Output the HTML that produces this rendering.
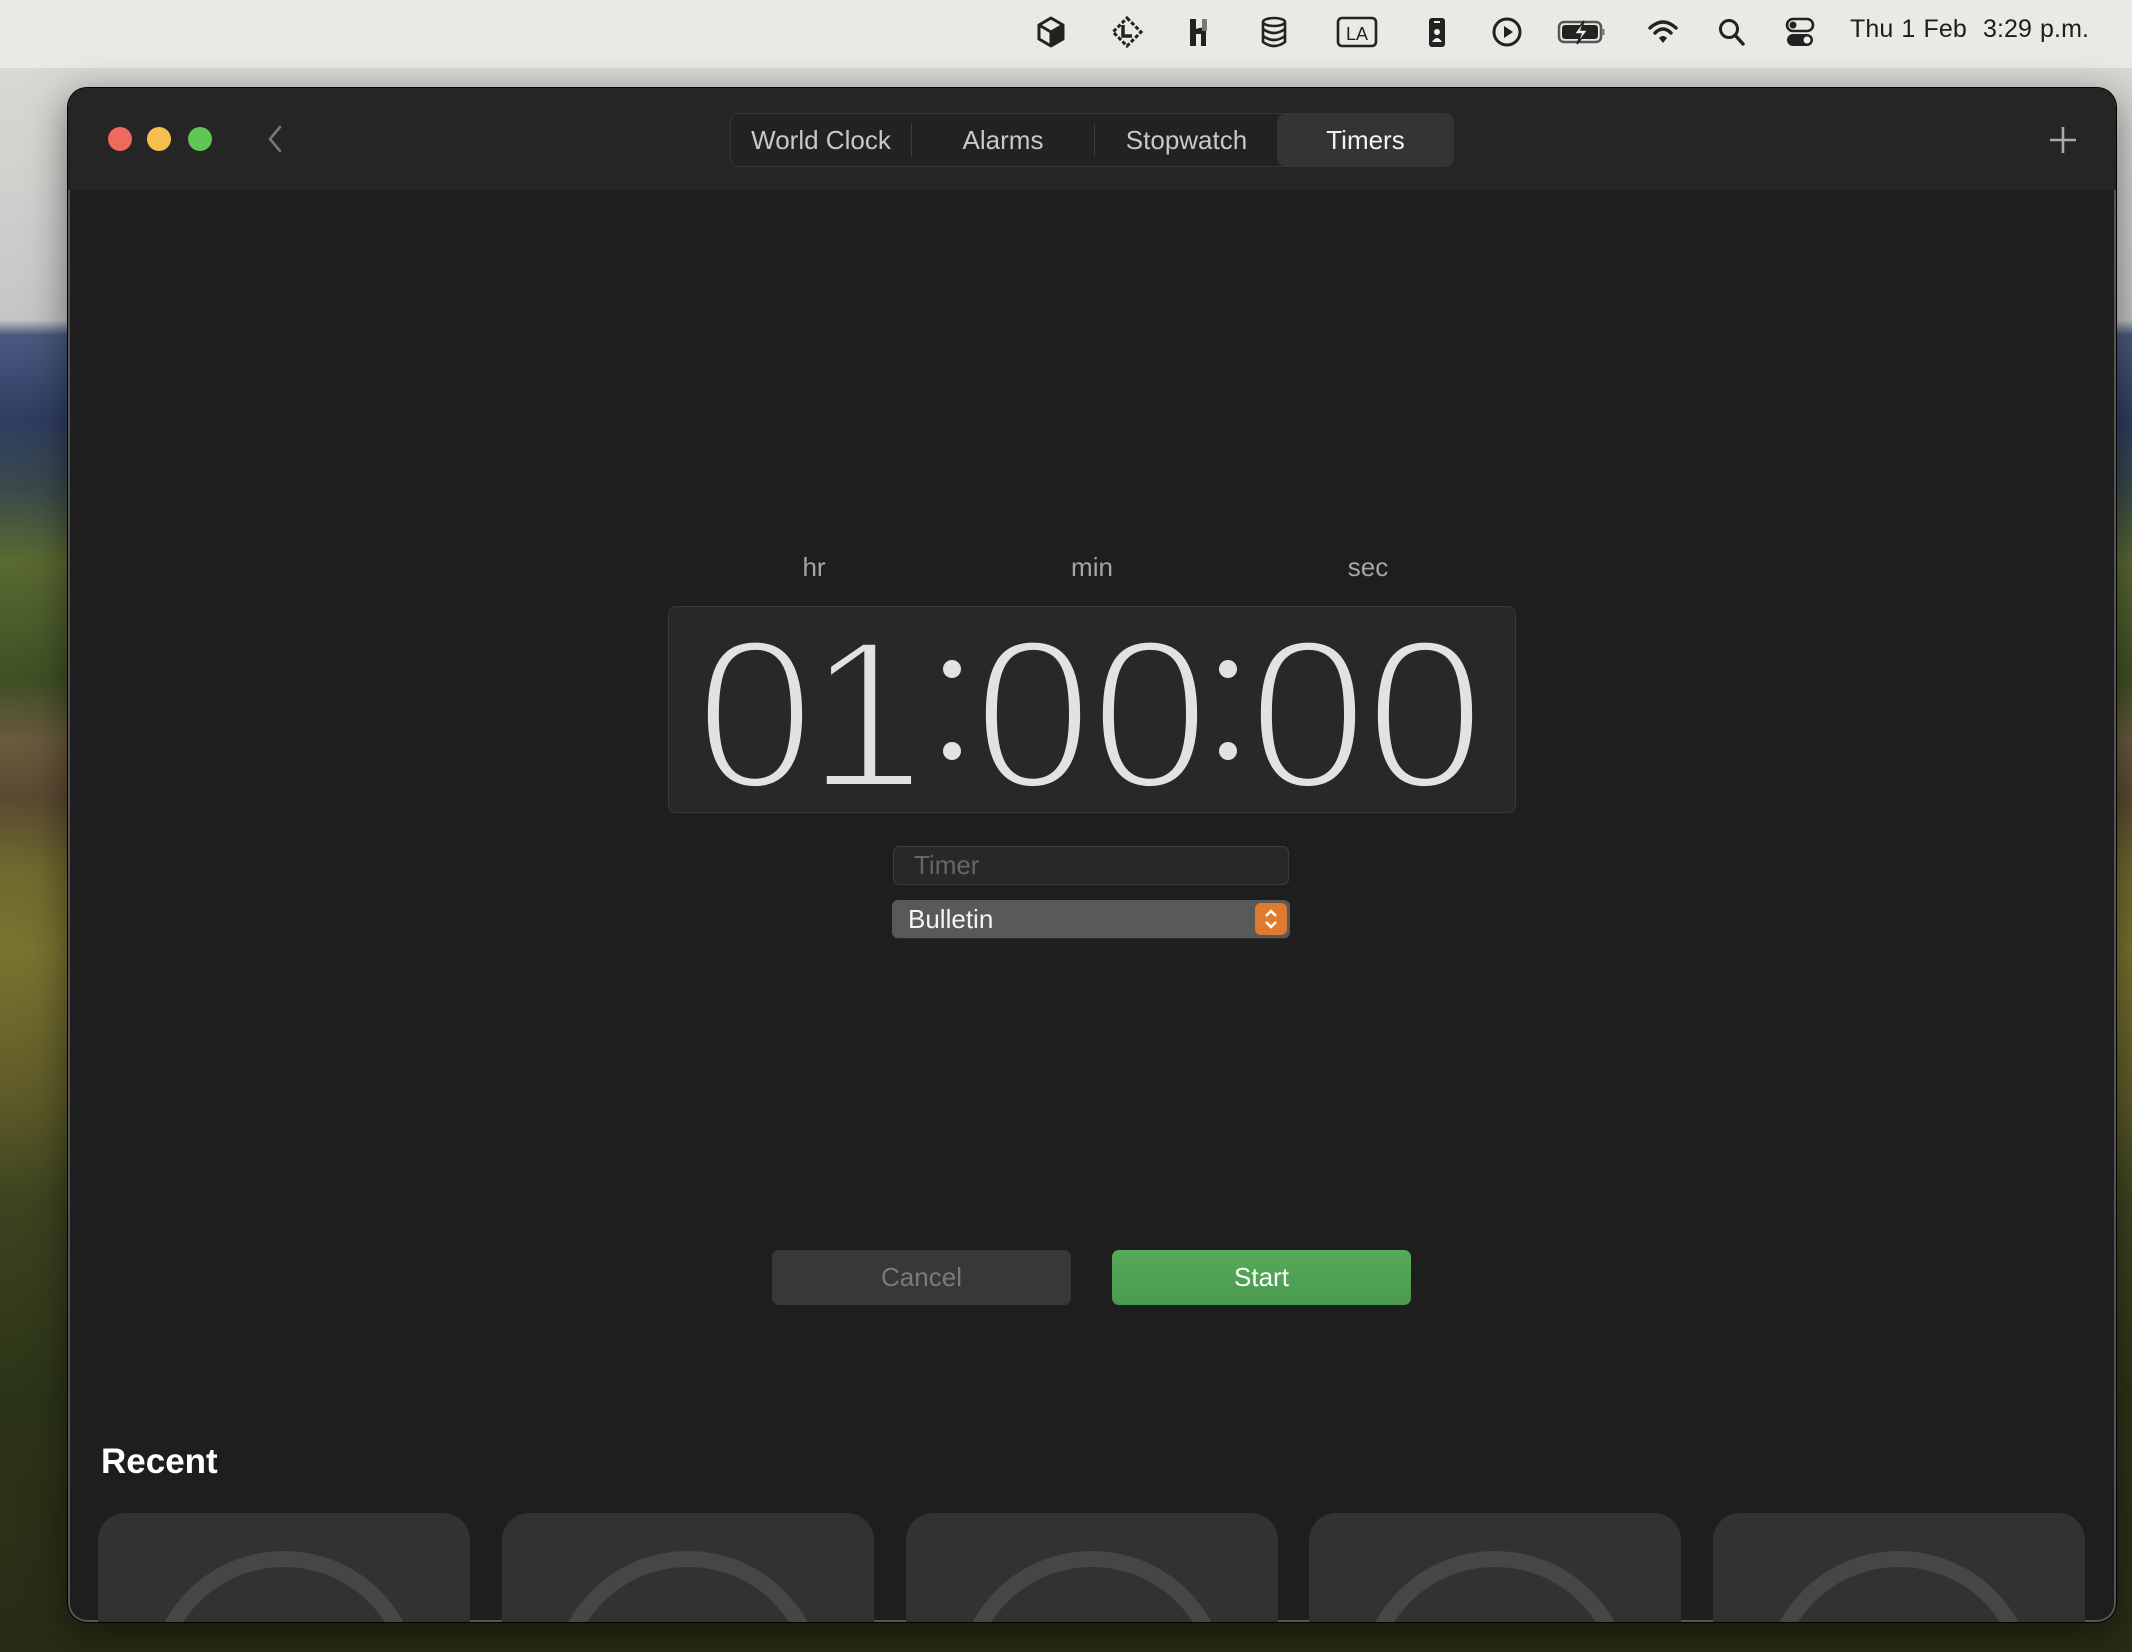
<!DOCTYPE html>
<html><head><meta charset="utf-8"><style>
*{margin:0;padding:0;box-sizing:border-box}
html,body{width:2132px;height:1652px;overflow:hidden}
body{position:relative;font-family:"Liberation Sans",sans-serif;
background:linear-gradient(180deg,#e6e4df 0,#d9d8d3 68px,#cfd0cd 200px,#c4c6c6 320px,#4a5a80 335px,#2f3d62 420px,#3a4a4a 490px,#5a6a32 560px,#3f5024 680px,#6a5a3e 740px,#5a4a30 800px,#6f6a2e 870px,#7a7430 950px,#5e5a28 1100px,#3d4420 1200px,#2c3418 1400px,#2a2c16 1652px);}
.menubar{position:absolute;left:0;top:0;width:2132px;height:68px;background:#ebe9e4}
.mi{position:absolute;top:15px;width:34px;height:34px}
.clock{position:absolute;left:1850px;top:15px;font-size:25px;color:#1d1d1d;letter-spacing:.1px;word-spacing:1px}
.win{position:absolute;left:68px;top:88px;width:2048px;height:1534px;border-radius:19px;background:#1e1e1e;overflow:hidden;box-shadow:0 0 0 1px #000,0 0 0 2px #555 inset,0 10px 40px rgba(0,0,0,.5)}
.title{position:absolute;left:0;top:0;width:100%;height:102px;background:#252525}
.tl{position:absolute;top:39px;width:24px;height:24px;border-radius:50%}
.seg{position:absolute;left:662px;top:25px;width:724px;height:54px;border:1px solid #353535;border-radius:9px;background:#222}
.seg div{position:absolute;top:0;height:52px;line-height:52px;text-align:center;font-size:26px;color:#c8c8c8}
.seg .sep{width:1px;height:34px;top:9px;background:#3a3a3a}
.lbl{position:absolute;top:464px;font-size:26px;color:#a5a5a5;transform:translateX(-50%)}
.box{position:absolute;left:600px;top:518px;width:848px;height:207px;background:#282828;border:1px solid #3a3a3a;border-radius:8px}
.d{position:absolute;top:520px;font-size:214px;line-height:214px;color:#e2e2e2;transform:translateX(-50%);-webkit-text-stroke:8px #282828}
.c{color:transparent;-webkit-text-stroke:0}
.dot{position:absolute;width:18px;height:18px;border-radius:50%;background:#e2e2e2;margin-left:-9px;margin-top:-9px}
.btn{position:absolute;top:1162px;width:299px;height:55px;border-radius:7px;font-size:26px;line-height:55px;text-align:center}
.card{position:absolute;top:1425px;width:372px;height:140px;background:#323232;border-radius:27px 27px 0 0;overflow:hidden}
.card i{position:absolute;left:50%;top:38px;width:272px;height:272px;margin-left:-136px;border-radius:50%;border:16px solid #464646}
</style></head><body>
<div class="menubar">
<svg class="mi" style="left:1034px" viewBox="0 0 34 34"><path d="M17 3 L29 10 V24 L17 31 L5 24 V10Z M5 10 L17 17 L29 10 M17 17 V31" fill="none" stroke="#222" stroke-width="3" stroke-linejoin="round"/><path d="M17 17 L29 10 V24 L17 31Z" fill="#222"/></svg>
<svg class="mi" style="left:1110px" viewBox="0 0 34 34"><path d="M17 3 L31 17 L17 31 L3 17Z" fill="none" stroke="#222" stroke-width="3" stroke-dasharray="4 2"/><path d="M13 10 V21 H22" fill="none" stroke="#222" stroke-width="3.5"/></svg>
<svg class="mi" style="left:1182px" viewBox="0 0 34 34"><path d="M8 4 H14 V14 Q20 11 24 15 V31 H19 V19 H14 V31 H8Z" fill="#222"/><rect x="20" y="4" width="5" height="12" fill="#777"/></svg>
<svg class="mi" style="left:1257px" viewBox="0 0 34 34"><g fill="none" stroke="#222" stroke-width="2.6"><ellipse cx="17" cy="7" rx="11" ry="4"/><path d="M6 7 V27 Q17 35 28 27 V7 M6 14 Q17 22 28 14 M6 21 Q17 29 28 21"/></g></svg>
<svg class="mi" style="left:1336px;width:42px" viewBox="0 0 42 34"><rect x="2" y="3" width="38" height="28" rx="4" fill="none" stroke="#222" stroke-width="2.6"/><text x="21" y="25" font-family="Liberation Sans" font-size="18" text-anchor="middle" fill="#222">LA</text></svg>
<svg class="mi" style="left:1420px" viewBox="0 0 34 34"><rect x="9" y="3" width="16" height="29" rx="3" fill="#222"/><rect x="14" y="6" width="6" height="2" fill="#eee"/><circle cx="17" cy="17" r="3" fill="#eee"/><path d="M12 27 Q17 19 22 27Z" fill="#eee"/></svg>
<svg class="mi" style="left:1490px" viewBox="0 0 34 34"><circle cx="17" cy="17" r="13" fill="none" stroke="#222" stroke-width="3"/><path d="M14 11 L23 17 L14 23Z" fill="#222"/></svg>
<svg class="mi" style="left:1557px;width:52px" viewBox="0 0 52 34"><rect x="2" y="7" width="42" height="20" rx="5" fill="none" stroke="#555" stroke-width="2.5"/><rect x="5" y="10" width="36" height="14" rx="3" fill="#222"/><path d="M46 14 V20" stroke="#777" stroke-width="3"/><path d="M27 6 L17 19 H24 L20 29 L31 15 H24Z" fill="#eee" stroke="#222" stroke-width="1.5"/></svg>
<svg class="mi" style="left:1646px" viewBox="0 0 34 34"><g fill="none" stroke="#222" stroke-width="3.4" stroke-linecap="round"><path d="M4 13 Q17 1 30 13"/><path d="M9 18 Q17 10 25 18"/></g><path d="M13 23 Q17 19 21 23 L17 28Z" fill="#222"/></svg>
<svg class="mi" style="left:1715px" viewBox="0 0 34 34"><circle cx="14" cy="14" r="8.5" fill="none" stroke="#222" stroke-width="3"/><path d="M20 20 L28 29" stroke="#222" stroke-width="3.4" stroke-linecap="round"/></svg>
<svg class="mi" style="left:1783px" viewBox="0 0 34 34"><rect x="4" y="4" width="26" height="12" rx="6" fill="none" stroke="#222" stroke-width="2.6"/><circle cx="10" cy="10" r="3.5" fill="#222"/><rect x="4" y="19" width="26" height="12" rx="6" fill="#222"/><circle cx="24" cy="25" r="3.5" fill="#eee"/></svg>
<div class="clock">Thu 1 Feb&nbsp; 3:29 p.m.</div>
</div>
<div class="win">
<div class="title">
<div class="tl" style="left:40px;background:#ec6a5e"></div>
<div class="tl" style="left:79px;background:#f4bf4f"></div>
<div class="tl" style="left:120px;background:#61c554"></div>
<svg style="position:absolute;left:196px;top:36px" width="24" height="30" viewBox="0 0 24 30"><path d="M16 3 L6 15 L16 27" fill="none" stroke="#777" stroke-width="2.6" stroke-linecap="round"/></svg>
<div class="seg">
<div style="left:0;width:180px">World Clock</div>
<div class="sep" style="left:180px"></div>
<div style="left:181px;width:182px">Alarms</div>
<div class="sep" style="left:363px"></div>
<div style="left:364px;width:183px">Stopwatch</div>
<div style="left:546px;width:177px;background:#343434;border-radius:8px;color:#f2f2f2">Timers</div>
</div>
<svg style="position:absolute;left:1980px;top:37px" width="30" height="30" viewBox="0 0 30 30"><path d="M15 2 V28 M2 15 H28" stroke="#aaa" stroke-width="2.6"/></svg>
</div>
<div class="box"></div>
<div class="lbl" style="left:746px">hr</div>
<div class="lbl" style="left:1024px">min</div>
<div class="lbl" style="left:1300px">sec</div>
<div class="d" style="left:687px">0</div>
<div class="d" style="left:798px">1</div>
<div class="d c" style="left:884px">:</div>
<div class="d" style="left:965px">0</div>
<div class="d" style="left:1082px">0</div>
<div class="d c" style="left:1160px">:</div>
<div class="d" style="left:1240px">0</div>
<div class="d" style="left:1357px">0</div>
<div class="dot" style="left:884px;top:581px"></div>
<div class="dot" style="left:884px;top:663px"></div>
<div class="dot" style="left:1160px;top:581px"></div>
<div class="dot" style="left:1160px;top:663px"></div>
<div style="position:absolute;left:825px;top:758px;width:396px;height:39px;background:#282828;border:1px solid #3c3c3c;border-radius:6px;font-size:26px;line-height:37px;color:#666;padding-left:20px">Timer</div>
<div style="position:absolute;left:824px;top:812px;width:398px;height:38px;background:#595959;border-radius:6px;font-size:26px;line-height:38px;color:#f4f4f4;padding-left:16px;box-shadow:0 1px 0 #2a2a2a">Bulletin
<svg style="position:absolute;right:3px;top:3px" width="32" height="32" viewBox="0 0 32 32"><rect width="32" height="32" rx="6" fill="#e07a2e"/><path d="M11 13 L16 8 L21 13 M11 19 L16 24 L21 19" fill="none" stroke="#fff" stroke-width="2.4"/></svg></div>
<div class="btn" style="left:704px;background:#383838;color:#7a7a7a">Cancel</div>
<div class="btn" style="left:1044px;background:linear-gradient(#56ab58,#4a9a4e);color:#fff">Start</div>
<div style="position:absolute;left:33px;top:1354px;font-size:35px;font-weight:bold;color:#fff">Recent</div>
<div class="card" style="left:30px"><i></i></div>
<div class="card" style="left:434px"><i></i></div>
<div class="card" style="left:838px"><i></i></div>
<div class="card" style="left:1241px"><i></i></div>
<div class="card" style="left:1645px"><i></i></div>
</div>
</body></html>
